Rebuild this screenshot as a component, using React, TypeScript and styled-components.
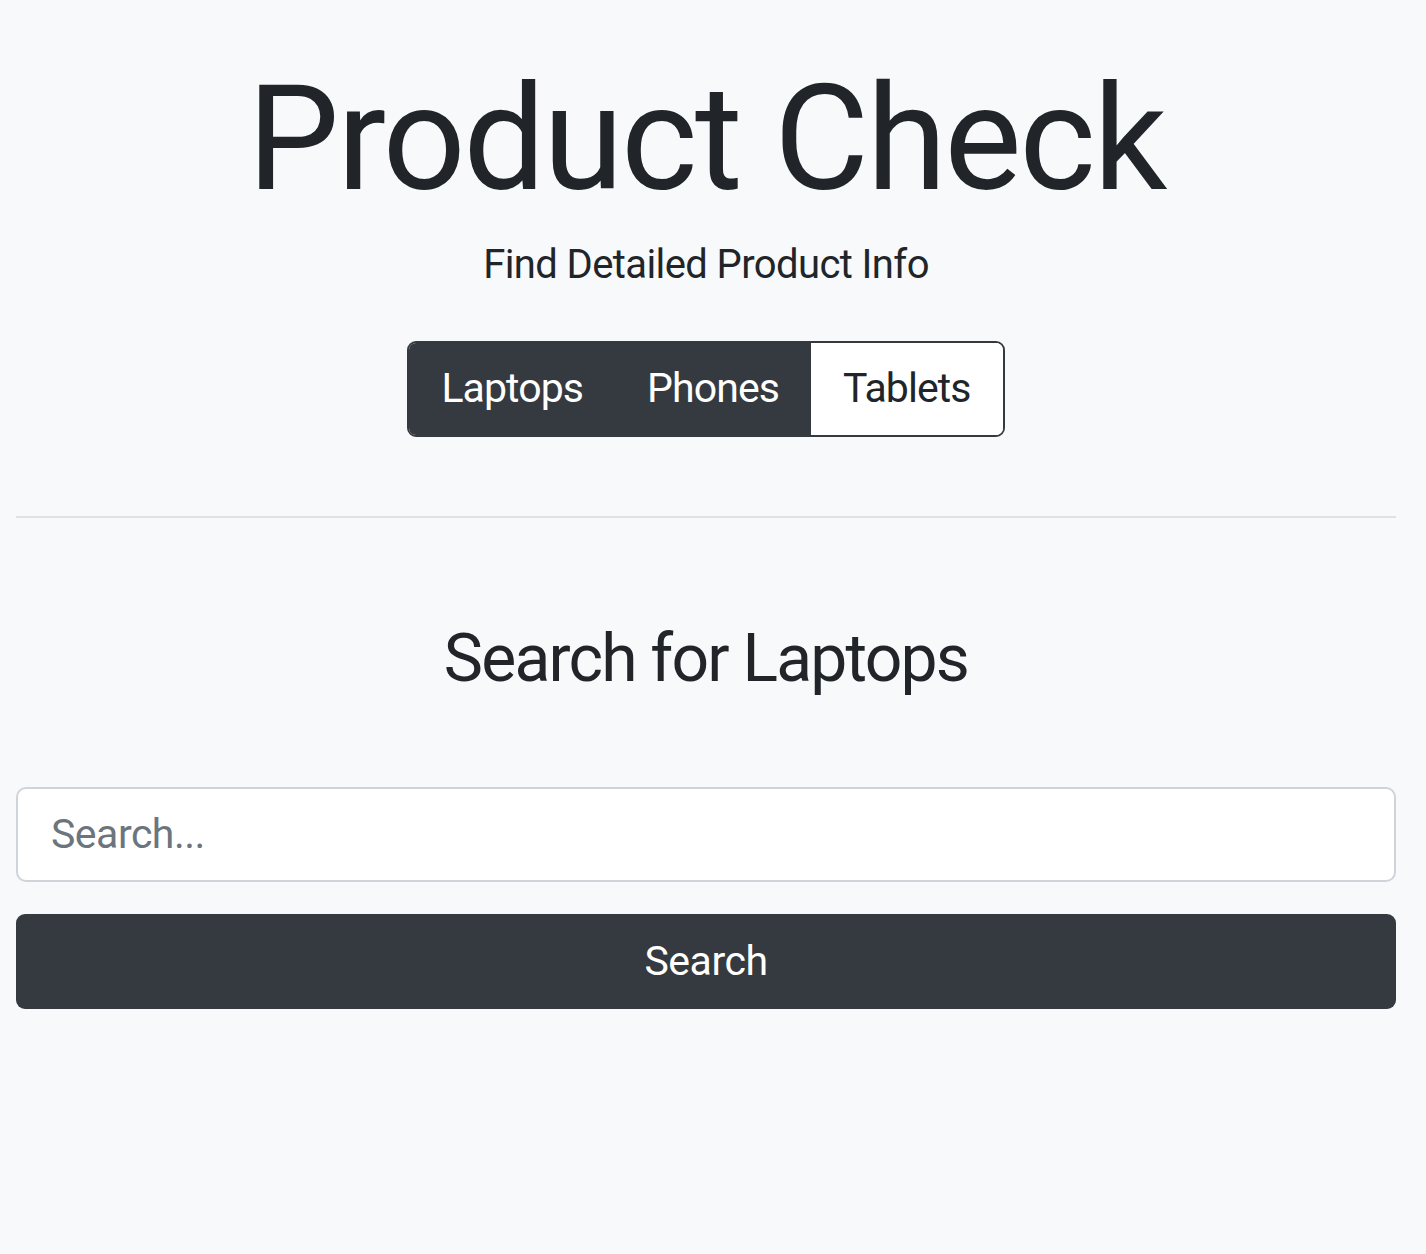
import React, { useState } from "react";
import styled, { createGlobalStyle } from "styled-components";

const Global = createGlobalStyle`
  * { box-sizing: border-box; }
  html, body { margin: 0; padding: 0; background: #f8f9fa; }
  body { font-family: Roboto, "Noto Sans", Arial, sans-serif; color: #212529; }
`;

const Page = styled.div`
  padding: 52px 30px 0 16px;
  display: flex;
  flex-direction: column;
  align-items: stretch;
`;

const Header = styled.header`
  display: flex;
  flex-direction: column;
  align-items: center;
`;

const Title = styled.h1`
  margin: 0;
  font-size: 146px;
  font-weight: 400;
  line-height: 1.2;
  letter-spacing: -2.5px;
`;

const Subtitle = styled.p`
  margin: 14px 0 0;
  font-size: 40px;
  font-weight: 400;
  line-height: 1.2;
  letter-spacing: -0.6px;
`;

const Group = styled.div`
  margin-top: 52px;
  display: inline-flex;
  border-radius: 9px;
  overflow: hidden;
  border: 2px solid #343a40;
`;

const Tab = styled.button<{ $active: boolean }>`
  font-family: inherit;
  font-size: 41px;
  line-height: 1.5;
  letter-spacing: -0.9px;
  padding: 15px 32px;
  border: none;
  background: ${(p) => (p.$active ? "#343a40" : "#ffffff")};
  color: ${(p) => (p.$active ? "#ffffff" : "#212529")};
  cursor: pointer;
`;

const Rule = styled.hr`
  margin: 79px 0 0;
  border: none;
  border-top: 2px solid #dee2e6;
`;

const Heading = styled.h2`
  margin: 101px 0 0;
  text-align: center;
  font-size: 66px;
  font-weight: 400;
  line-height: 1.2;
  letter-spacing: -1.8px;
`;

const Form = styled.form`
  margin-top: 89px;
  display: flex;
  flex-direction: column;
  gap: 32px;
`;

const Input = styled.input`
  height: 95px;
  padding: 0 33px;
  font-family: inherit;
  font-size: 41px;
  letter-spacing: -0.5px;
  border: 2px solid #ced4da;
  border-radius: 10px;
  background: #fff;
  color: #212529;
  &::placeholder { color: #6c757d; }
  &:focus { outline: none; }
`;

const Submit = styled.button`
  height: 95px;
  font-family: inherit;
  font-size: 41px;
  letter-spacing: -0.5px;
  border: none;
  border-radius: 9px;
  background: #343a40;
  color: #fff;
`;

export default function App() {
  const [cat] = useState("Laptops");
  const cats = ["Laptops", "Phones", "Tablets"];
  return (
    <>
      <Global />
      <Page>
        <Header>
          <Title>Product Check</Title>
          <Subtitle>Find Detailed Product Info</Subtitle>
          <Group>
            {cats.map((c) => (
              <Tab key={c} $active={c !== "Tablets"}>{c}</Tab>
            ))}
          </Group>
        </Header>
        <Rule />
        <Heading>Search for {cat}</Heading>
        <Form onSubmit={(e) => e.preventDefault()}>
          <Input placeholder="Search..." />
          <Submit type="submit">Search</Submit>
        </Form>
      </Page>
    </>
  );
}
